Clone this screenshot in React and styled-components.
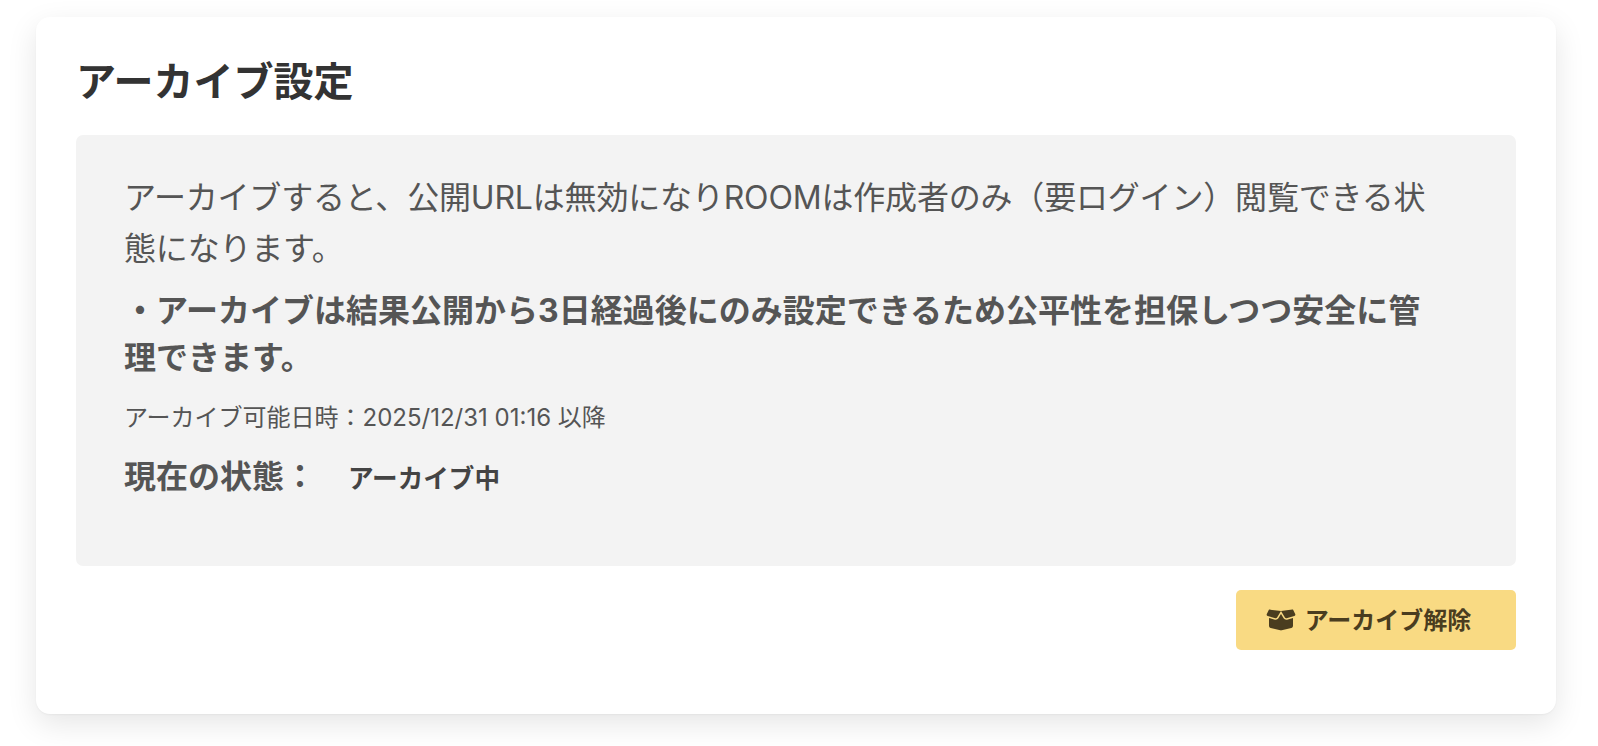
import React from 'react'
import styled, { createGlobalStyle } from 'styled-components'
import { FaBoxOpen } from 'react-icons/fa6'

const GlobalStyle = createGlobalStyle`
    html, body {
        margin: 0;
        padding: 0;
        background-color: #fff;
    }

    body {
        font-family: "Inter", "Noto Sans CJK JP", sans-serif;
    }
`

const App = () => {
    return (
        <>
            <GlobalStyle />
            <Page>
                <Card>
                    <Title>アーカイブ設定</Title>
                    <InfoBox>
                        <Description>
                            アーカイブすると、公開URLは無効になりROOMは作成者のみ（要ログイン）閲覧できる状態になります。
                        </Description>
                        <Notice>
                            ・アーカイブは結果公開から3日経過後にのみ設定できるため公平性を担保しつつ安全に管理できます。
                        </Notice>
                        <DateLine>アーカイブ可能日時：2025/12/31 01:16 以降</DateLine>
                        <StatusRow>
                            <StatusLabel>現在の状態：</StatusLabel>
                            <StatusValue>アーカイブ中</StatusValue>
                        </StatusRow>
                    </InfoBox>
                    <Actions>
                        <ActionButton type='button'>
                            <FaBoxOpen />
                            <span>アーカイブ解除</span>
                        </ActionButton>
                    </Actions>
                </Card>
            </Page>
        </>
    )
}

const Page = styled.div`
    box-sizing: border-box;
    width: 1598px;
    height: 746px;
    padding: 17px 42px 0 36px;
    overflow: hidden;
`

const Card = styled.div`
    box-sizing: border-box;
    width: 1520px;
    height: 697px;
    padding: 37px 40px 0;
    background-color: #fff;
    border-radius: 14px;
    box-shadow: 0 10px 30px rgba(0, 0, 0, 0.1), 0 1px 2px rgba(0, 0, 0, 0.04);
`

const Title = styled.h2`
    margin: 0 0 25px;
    height: 56px;
    font-size: 40px;
    line-height: 56px;
    font-weight: 700;
    color: #333;
`

const InfoBox = styled.div`
    box-sizing: border-box;
    height: 431px;
    padding: 37px 70px 0 48px;
    background-color: #f3f3f3;
    border-radius: 7px;
    color: #555;
`

const Description = styled.p`
    margin: 0;
    font-size: 32px;
    line-height: 51.2px;
    font-weight: 400;
    letter-spacing: -0.18px;
`

const Notice = styled.p`
    margin: 13px 0 0;
    font-size: 32px;
    line-height: 47px;
    font-weight: 700;
`

const DateLine = styled.p`
    margin: 19px 0 0;
    font-size: 24px;
    line-height: 36px;
`

const StatusRow = styled.div`
    display: flex;
    align-items: center;
    margin-top: 18px;
`

const StatusLabel = styled.span`
    font-size: 32px;
    line-height: 46px;
    font-weight: 700;
`

const StatusValue = styled.span`
    margin: 0 0 2px 32px;
    font-size: 25.6px;
    font-weight: 700;
    color: #444;
`

const Actions = styled.div`
    display: flex;
    justify-content: flex-end;
    margin-top: 24px;
`

const ActionButton = styled.button`
    display: flex;
    align-items: center;
    justify-content: center;
    box-sizing: border-box;
    width: 280px;
    height: 60px;
    padding: 0 15px 0 0;
    border: none;
    border-radius: 5px;
    background-color: #f9da83;
    color: #4a3d1f;
    font-family: inherit;
    font-size: 24px;
    font-weight: 700;

    svg {
        width: 30px;
        height: 24px;
        margin-right: 9px;
    }

    span {
        margin-bottom: 4px;
    }
`

export default App
